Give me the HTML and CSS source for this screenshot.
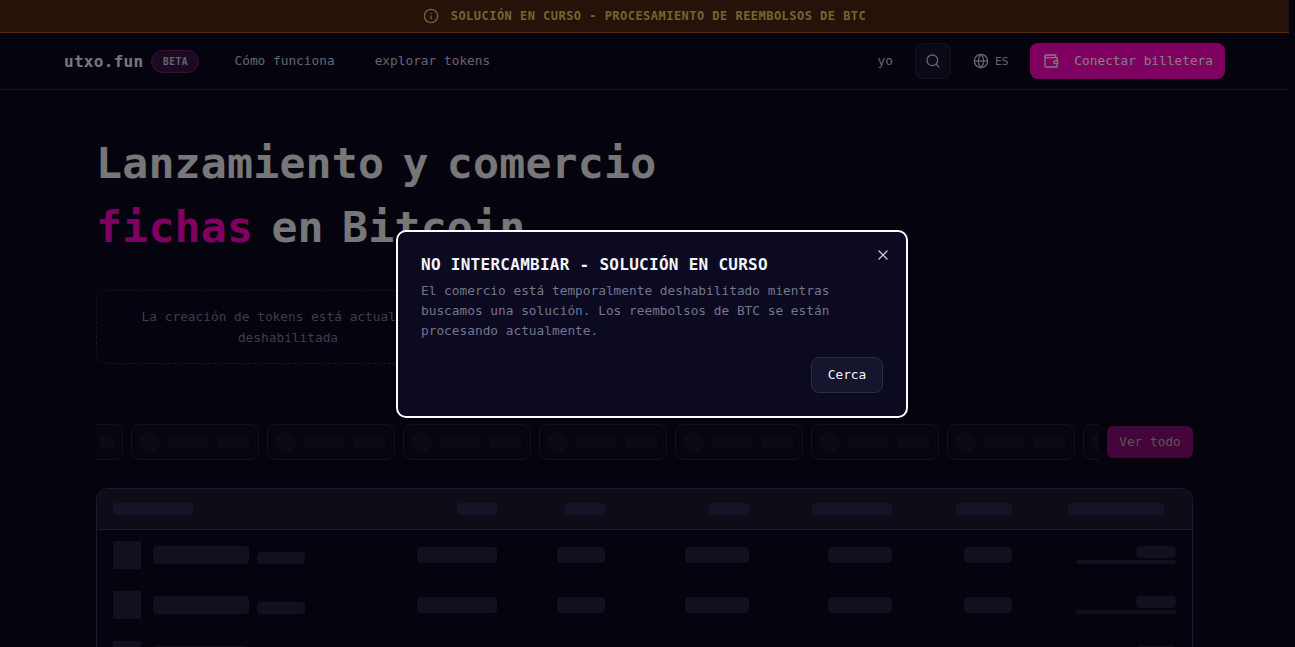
FILE: index.html
```html
<!DOCTYPE html>
<html lang="es">
<head>
<meta charset="utf-8">
<title>utxo.fun</title>
<link rel="stylesheet" href="styles.css">
</head>
<body>
<div class="page">
  <div class="banner">
    <svg class="banner-icon" viewBox="0 0 24 24" fill="none" stroke="currentColor" stroke-width="2" stroke-linecap="round"><circle cx="12" cy="12" r="10"/><path d="M12 16v-4M12 8h.01"/></svg>
    <span>SOLUCIÓN EN CURSO - PROCESAMIENTO DE REEMBOLSOS DE BTC</span>
  </div>
  <header class="nav">
    <div class="nav-left">
      <span class="logo">utxo.fun</span>
      <span class="beta">BETA</span>
      <a class="nav-link first">Cómo funciona</a>
      <a class="nav-link">explorar tokens</a>
    </div>
    <div class="nav-right">
      <a class="nav-me">yo</a>
      <span class="search-btn"><svg viewBox="0 0 24 24" fill="none" stroke="currentColor" stroke-width="2" stroke-linecap="round"><circle cx="11" cy="11" r="8"/><path d="m21 21-4.3-4.3"/></svg></span>
      <span class="lang"><svg viewBox="0 0 24 24" fill="none" stroke="currentColor" stroke-width="2"><circle cx="12" cy="12" r="10"/><path d="M12 2a14.5 14.5 0 0 0 0 20 14.5 14.5 0 0 0 0-20"/><path d="M2 12h20"/></svg>ES</span>
      <span class="connect"><svg viewBox="0 0 24 24" fill="none" stroke="currentColor" stroke-width="2" stroke-linecap="round" stroke-linejoin="round"><path d="M21 12V7H5a2 2 0 0 1 0-4h14v4"/><path d="M3 5v14a2 2 0 0 0 2 2h16v-5"/><path d="M18 12a2 2 0 0 0 0 4h4v-4Z"/></svg><span class="connect-label">Conectar billetera</span></span>
    </div>
  </header>
  <main class="main">
    <h1 class="hero"><span class="hero-line">Lanzamiento y comercio</span><span class="hero-line"><em>fichas</em> en Bitcoin</span></h1>
    <div class="notice">La creación de tokens está actualmente deshabilitada</div>
    <div class="ticker-row">
      <div class="ticker">
        <div class="chip cut"><i class="bar b2"></i></div>
        <div class="chip"><i class="dot"></i><i class="bar b1"></i><i class="bar b2"></i></div>
        <div class="chip"><i class="dot"></i><i class="bar b1"></i><i class="bar b2"></i></div>
        <div class="chip"><i class="dot"></i><i class="bar b1"></i><i class="bar b2"></i></div>
        <div class="chip"><i class="dot"></i><i class="bar b1"></i><i class="bar b2"></i></div>
        <div class="chip"><i class="dot"></i><i class="bar b1"></i><i class="bar b2"></i></div>
        <div class="chip"><i class="dot"></i><i class="bar b1"></i><i class="bar b2"></i></div>
        <div class="chip"><i class="dot"></i><i class="bar b1"></i><i class="bar b2"></i></div>
        <div class="chip"><i class="dot"></i><i class="bar b1"></i><i class="bar b2"></i></div>
      </div>
      <span class="see-all"><span class="see-all-label">Ver todo</span></span>
    </div>
    <section class="table">
      <div class="thead">
        <i class="th c-name"><b class="w80"></b></i>
        <i class="th c-a"><b class="w40"></b></i>
        <i class="th c-b"><b class="w40"></b></i>
        <i class="th c-c"><b class="w40"></b></i>
        <i class="th c-d"><b class="w80"></b></i>
        <i class="th c-e"><b class="w56"></b></i>
        <i class="th c-f"><b class="w96"></b></i>
      </div>
      <div class="trow">
        <div class="c-name cell-name"><i class="thumb"></i><i class="nm"></i><i class="tk"></i></div>
        <div class="c-a td"><i class="pill w80"></i></div>
        <div class="c-b td"><i class="pill w48"></i></div>
        <div class="c-c td"><i class="pill w64"></i></div>
        <div class="c-d td"><i class="pill w64"></i></div>
        <div class="c-e td"><i class="pill w48"></i></div>
        <div class="c-f prog"><i class="pct"></i><i class="track"></i></div>
      </div>
      <div class="trow">
        <div class="c-name cell-name"><i class="thumb"></i><i class="nm"></i><i class="tk"></i></div>
        <div class="c-a td"><i class="pill w80"></i></div>
        <div class="c-b td"><i class="pill w48"></i></div>
        <div class="c-c td"><i class="pill w64"></i></div>
        <div class="c-d td"><i class="pill w64"></i></div>
        <div class="c-e td"><i class="pill w48"></i></div>
        <div class="c-f prog"><i class="pct"></i><i class="track"></i></div>
      </div>
      <div class="trow">
        <div class="c-name cell-name"><i class="thumb"></i><i class="nm"></i><i class="tk"></i></div>
        <div class="c-a td"><i class="pill w80"></i></div>
        <div class="c-b td"><i class="pill w48"></i></div>
        <div class="c-c td"><i class="pill w64"></i></div>
        <div class="c-d td"><i class="pill w64"></i></div>
        <div class="c-e td"><i class="pill w48"></i></div>
        <div class="c-f prog"><i class="pct"></i><i class="track"></i></div>
      </div>
    </section>
  </main>
</div>
<div class="backdrop"></div>
<div class="modal">
  <button class="modal-x" aria-label="Cerrar"><svg viewBox="0 0 24 24" fill="none" stroke="currentColor" stroke-width="2" stroke-linecap="round"><path d="M18 6 6 18M6 6l12 12"/></svg></button>
  <h2 class="modal-title">NO INTERCAMBIAR - SOLUCIÓN EN CURSO</h2>
  <p class="modal-text">El comercio está temporalmente deshabilitado mientras buscamos una solución. Los reembolsos de BTC se están procesando actualmente.</p>
  <div class="modal-foot"><button class="modal-btn">Cerca</button></div>
</div>
</body>
</html>
```
FILE: styles.css
```css
* { box-sizing: border-box; }
html, body { margin: 0; height: 100%; overflow: hidden; background: #06061c; }
body { font-family: "DejaVu Sans Mono", monospace; font-size: 12.8px; color: #e4e4f0; }
i, em { font-style: normal; display: block; }
b { display: block; }
.page { width: 1289px; height: 647px; overflow: hidden; background: #08061c; }

.banner { height: 33px; display: flex; align-items: center; justify-content: center; gap: 12px; background: #4c2412; border-bottom: 1px solid #a85410; color: #e8c862; font-size: 12px; font-weight: 700; letter-spacing: .47px; }
.banner-icon { width: 16px; height: 16px; }

.nav { height: 57px; padding: 0 64px; display: flex; align-items: center; justify-content: space-between; border-bottom: 1px solid #28284c; }
.nav-left, .nav-right { display: flex; align-items: center; }
.logo { font-size: 16px; font-weight: 700; letter-spacing: .3px; color: #f0f0f8; }
.beta { margin-left: 8px; height: 23px; width: 48px; display: flex; align-items: center; justify-content: center; border: 1px solid #7a1a72; border-radius: 12px; background: #341444; font-size: 9.6px; font-weight: 700; letter-spacing: .48px; color: #d0c8e0; }
.nav-link { margin-left: 40px; padding-bottom: 2px; color: #c8c8d8; font-size: 12.8px; }
.nav-link.first { margin-left: 35px; }
.nav-me { padding-bottom: 2px; color: #c8c8d8; }
.search-btn { margin-left: 22px; width: 36px; height: 36px; border: 1px solid #28284c; border-radius: 8px; background: #14142e; display: flex; align-items: center; justify-content: center; color: #c8c8d8; }
.search-btn svg { width: 16px; height: 16px; }
.lang { margin-left: 22px; width: 36px; display: flex; align-items: center; gap: 6px; font-size: 11.2px; color: #c8c8d8; }
.lang svg { width: 16px; height: 16px; flex: none; }
.connect { margin-left: 21px; width: 195px; height: 36px; padding: 0 12px 0 13px; border-radius: 8px; background: #ff00c0; display: flex; align-items: center; justify-content: space-between; color: #fff; }
.connect svg { width: 16px; height: 16px; }
.connect-label { padding-bottom: 2px; }

.main { padding: 41px 96px 0; }
.hero { margin: 0; font-size: 43.2px; line-height: 64px; font-weight: 700; letter-spacing: .2px; word-spacing: -8px; color: #eeeeee; }
.hero-line { display: block; }
.hero em { display: inline; color: #ff00c0; }
.notice { margin-top: 31px; width: 384px; height: 74px; padding: 15px 24px; border: 1px dashed #2a2a4c; border-radius: 12px; color: #7a7a9a; line-height: 21px; text-align: center; }

.ticker-row { margin-top: 60px; display: flex; align-items: center; gap: 8px; }
.ticker { flex: 1; min-width: 0; display: flex; gap: 8px; overflow: hidden; height: 36px; }
.chip { flex: none; width: 128px; height: 36px; border: 1px solid #20203c; border-radius: 8px; background: #0c0c1e; display: flex; align-items: center; padding: 0 8px; gap: 8px; }
.chip.cut { width: 27px; justify-content: flex-end; padding: 0 8px 0 0; border-radius: 0 8px 8px 0; border-left: 0; }
.dot { width: 20px; height: 20px; border-radius: 50%; background: #16162c; }
.bar { height: 12px; border-radius: 4px; background: #16162c; }
.bar.b1 { width: 40px; margin-right: 1px; }
.bar.b2 { width: 32px; }
.chip.cut .bar.b2 { width: 14px; border-radius: 0 4px 4px 0; }
.see-all { flex: none; width: 86px; height: 32px; border-radius: 6px; background: #8a0a74; color: #aaaaaa; display: flex; align-items: center; justify-content: center; }
.see-all-label { padding-bottom: 2px; }

.table { margin-top: 28px; height: 220px; border: 1px solid #343466; border-bottom: 0; border-radius: 12px 12px 0 0; overflow: hidden; }
.thead { height: 41px; padding: 0 16px; display: flex; align-items: center; background: #1a1a2e; border-bottom: 1px solid #343466; }
.trow { height: 50px; padding: 0 16px; display: flex; align-items: center; border-bottom: 1px solid #0e0e22; }
.c-name { flex: none; width: 304px; }
.c-a { flex: none; width: 80px; }
.c-b { flex: none; width: 108px; }
.c-c { flex: none; width: 144px; }
.c-d { flex: none; width: 143px; }
.c-e { flex: none; width: 120px; }
.c-f { flex: none; width: 164px; }
.thead .th b { height: 12px; border-radius: 4px; background: #28284c; margin-left: auto; }
.thead .c-name b { margin-left: 0; }
.thead .c-f b { margin-right: 12px; }
.w40 { width: 40px; } .w48 { width: 48px; } .w56 { width: 56px; } .w64 { width: 64px; } .w80 { width: 80px; } .w96 { width: 96px; }
.cell-name { display: flex; align-items: flex-end; gap: 8px; height: 28px; }
.thumb { width: 28px; height: 28px; background: #20203e; margin-right: 4px; }
.nm { width: 96px; height: 18px; border-radius: 4px; background: #20203e; margin-bottom: 5px; }
.tk { width: 48px; height: 12px; border-radius: 4px; background: #20203e; margin-bottom: 5px; }
.td { display: flex; justify-content: flex-end; }
.pill { height: 16px; border-radius: 4px; background: #20203e; }
.prog { display: flex; flex-direction: column; align-items: flex-end; gap: 2px; }
.pct { width: 40px; height: 12px; border-radius: 4px; background: #20203e; }
.track { width: 100px; height: 4px; border-radius: 2px; background: #20203e; }

.backdrop { position: fixed; inset: 0; background: rgba(0, 0, 0, .5); }
.modal { position: fixed; left: 396px; top: 230px; width: 512px; height: 188px; padding: 24px 23px 23px; border: 2px solid #fff; border-radius: 10px; background: #0b0a20; }
.modal-x { position: absolute; right: 15px; top: 15px; width: 16px; height: 16px; padding: 0; border: 0; background: none; color: #c8c8d8; }
.modal-x svg { width: 16px; height: 16px; display: block; }
.modal-title { margin: 0; font-size: 16px; line-height: 18px; font-weight: 700; letter-spacing: .28px; color: #f4f4ff; }
.modal-text { margin: 7px 0 0; line-height: 20px; color: #74748f; }
.modal-foot { margin-top: 16px; display: flex; justify-content: flex-end; }
.modal-btn { width: 72px; height: 36px; padding: 0 0 2px; border: 1px solid #2a2a4c; border-radius: 8px; background: #15152e; color: #f4f4ff; font: 12.8px "DejaVu Sans Mono", monospace; }
```
